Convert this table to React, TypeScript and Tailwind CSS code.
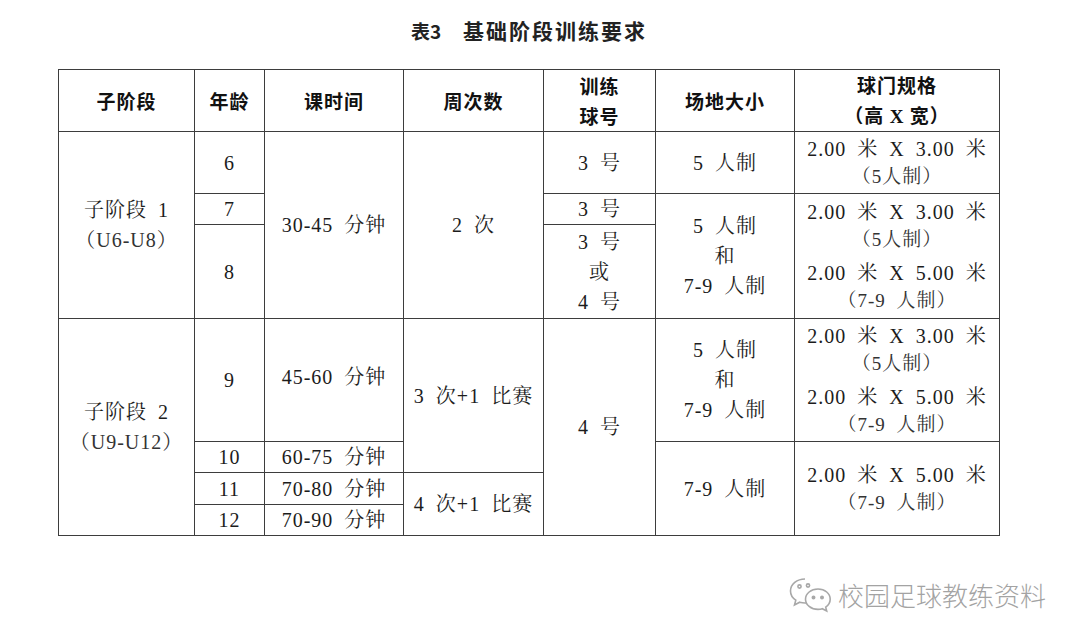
import type { ReactNode } from 'react'

const serif = "font-['Liberation_Serif','Noto_Serif_CJK_SC','Noto_Sans_CJK_SC',serif]"

function Cell({ className, children }: { className: string; children?: ReactNode }) {
  return (
    <div
      className={`flex flex-col items-center justify-center bg-white text-center ${className}`}
    >
      {children}
    </div>
  )
}

function Head({ className, children }: { className: string; children: ReactNode }) {
  return (
    <Cell className={`font-['Noto_Sans_CJK_SC',sans-serif] text-[19px] leading-[30px] font-bold tracking-[1px] [word-spacing:0px] text-[#111] ${className}`}>
      {children}
    </Cell>
  )
}

function Spec({ size, note }: { size: string; note: string }) {
  return (
    <div className="flex flex-col items-center leading-[27px]">
      <span>2.00 米 X {size} 米</span>
      <span className="text-[19px] text-[#333]">{note}</span>
    </div>
  )
}

function WeChatIcon() {
  return (
    <svg width="44" height="36" viewBox="0 0 44 36" fill="none" stroke="#a8a8a8" strokeWidth="1.6">
      <path d="M17 2C9 2 2.5 7.3 2.5 14c0 3.8 2 7 5.3 9.2L6.5 28l5.2-2.8c1.7.5 3.4.8 5.3.8 1 0 2-.1 2.9-.2" />
      <path d="M30 12c-7 0-12.5 4.6-12.5 10.2S23 32.4 30 32.4c1.5 0 3-.2 4.3-.7l4.4 2.3-1-3.9c2.7-1.9 4.5-4.8 4.5-7.9C42.2 16.6 37 12 30 12z" fill="white" />
      <circle cx="11.5" cy="9.5" r="1.6" />
      <circle cx="20" cy="8.5" r="1.6" />
      <circle cx="25.5" cy="20.5" r="1.2" fill="#a8a8a8" />
      <circle cx="34" cy="20.5" r="1.2" fill="#a8a8a8" />
    </svg>
  )
}

export default function App() {
  return (
    <div className="h-[641px] w-[1080px] overflow-hidden bg-white pt-[16px]">
      <div className="ml-[58px] w-[942px]">
        <div className="flex h-[30px] items-center justify-center font-['Noto_Sans_CJK_SC',sans-serif] font-bold text-[#222]">
          <span className="text-[19px]">表3</span>
          <span className="ml-[22px] text-[21px] tracking-[2px]">基础阶段训练要求</span>
        </div>

        <div
          className={`mt-[23px] grid grid-cols-[135px_69px_138px_139px_111px_138px_204px] grid-rows-[61px_61px_30px_93px_122px_30px_31px_30px] gap-px bg-[#3d3d3d] p-px text-[20px] leading-[30px] tracking-[1px] [word-spacing:5px] text-[#1c1c1c] ${serif}`}
        >
          <Head className="col-start-1 row-start-1">子阶段</Head>
          <Head className="col-start-2 row-start-1">年龄</Head>
          <Head className="col-start-3 row-start-1">课时间</Head>
          <Head className="col-start-4 row-start-1">周次数</Head>
          <Head className="col-start-5 row-start-1">
            <span>训练</span>
            <span>球号</span>
          </Head>
          <Head className="col-start-6 row-start-1">场地大小</Head>
          <Head className="col-start-7 row-start-1">
            <span>球门规格</span>
            <span>
              （高 <span className="font-['Liberation_Serif',serif]">X</span> 宽）
            </span>
          </Head>

          <Cell className="col-start-1 row-start-2 row-span-3">
            <span>子阶段 1</span>
            <span className="text-[#333]">（U6-U8）</span>
          </Cell>
          <Cell className="col-start-2 row-start-2">6</Cell>
          <Cell className="col-start-2 row-start-3">7</Cell>
          <Cell className="col-start-2 row-start-4">8</Cell>
          <Cell className="col-start-3 row-start-2 row-span-3">30-45 分钟</Cell>
          <Cell className="col-start-4 row-start-2 row-span-3">2 次</Cell>
          <Cell className="col-start-5 row-start-2">3 号</Cell>
          <Cell className="col-start-5 row-start-3">3 号</Cell>
          <Cell className="col-start-5 row-start-4">
            <span>3 号</span>
            <span>或</span>
            <span>4 号</span>
          </Cell>
          <Cell className="col-start-6 row-start-2">5 人制</Cell>
          <Cell className="col-start-6 row-start-3 row-span-2">
            <span>5 人制</span>
            <span>和</span>
            <span>7-9 人制</span>
          </Cell>
          <Cell className="col-start-7 row-start-2">
            <Spec size="3.00" note="（5人制）" />
          </Cell>
          <Cell className="col-start-7 row-start-3 row-span-2 gap-[7px]">
            <Spec size="3.00" note="（5人制）" />
            <Spec size="5.00" note="（7-9 人制）" />
          </Cell>

          <Cell className="col-start-1 row-start-5 row-span-4">
            <span>子阶段 2</span>
            <span className="text-[#333]">（U9-U12）</span>
          </Cell>
          <Cell className="col-start-2 row-start-5">9</Cell>
          <Cell className="col-start-2 row-start-6">10</Cell>
          <Cell className="col-start-2 row-start-7">11</Cell>
          <Cell className="col-start-2 row-start-8">12</Cell>
          <Cell className="col-start-3 row-start-5 pb-[6px]">45-60 分钟</Cell>
          <Cell className="col-start-3 row-start-6">60-75 分钟</Cell>
          <Cell className="col-start-3 row-start-7">70-80 分钟</Cell>
          <Cell className="col-start-3 row-start-8">70-90 分钟</Cell>
          <Cell className="col-start-4 row-start-5 row-span-2">3 次+1 比赛</Cell>
          <Cell className="col-start-4 row-start-7 row-span-2">4 次+1 比赛</Cell>
          <Cell className="col-start-5 row-start-5 row-span-4">4 号</Cell>
          <Cell className="col-start-6 row-start-5">
            <span>5 人制</span>
            <span>和</span>
            <span>7-9 人制</span>
          </Cell>
          <Cell className="col-start-6 row-start-6 row-span-3">7-9 人制</Cell>
          <Cell className="col-start-7 row-start-5 gap-[7px]">
            <Spec size="3.00" note="（5人制）" />
            <Spec size="5.00" note="（7-9 人制）" />
          </Cell>
          <Cell className="col-start-7 row-start-6 row-span-3">
            <Spec size="5.00" note="（7-9 人制）" />
          </Cell>
        </div>
      </div>

      <div className="mt-[41px] flex items-center justify-end pr-[34px]">
        <WeChatIcon />
        <span className="ml-[6px] font-['Noto_Sans_CJK_SC',sans-serif] text-[26px] leading-[34px] font-light text-[#a3a3a3]">
          校园足球教练资料
        </span>
      </div>
    </div>
  )
}
